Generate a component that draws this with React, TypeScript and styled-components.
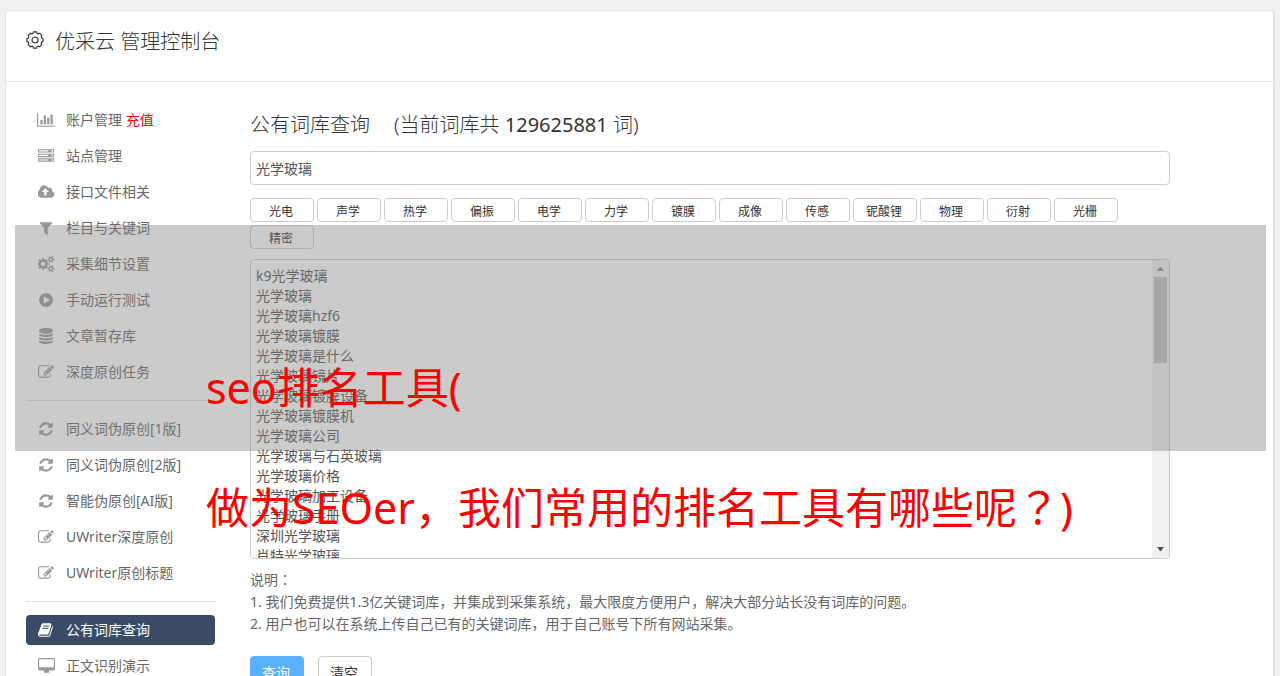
import React, { useState } from "react";
import styled, { createGlobalStyle } from "styled-components";

const GlobalStyle = createGlobalStyle`
  *, *::before, *::after { box-sizing: border-box; }
  html { scrollbar-width: none; }
  body {
    margin: 0;
    background: #f1f1f1;
    color: #666;
    font: 14px/22px "Noto Sans", "Noto Sans CJK SC", sans-serif;
  }
  button, input, textarea { font: inherit; }
`;

const Page = styled.div`
  position: relative;
  padding: 10px 5px 0;
`;

const Panel = styled.div`
  background: #fff;
  border: 1px solid #e4e4e4;
  border-right-width: 2px;
  border-radius: 4px;
`;

const Header = styled.header`
  display: flex;
  align-items: center;
  gap: 11px;
  height: 71px;
  padding: 0 20px 12px;
  border-bottom: 1px solid #e5e5e5;
  color: #333;
`;

const Title = styled.h1`
  margin: 0;
  padding-top: 4px;
  font-size: 20px;
  line-height: 28px;
  font-weight: 300;
`;

const Body = styled.div`
  display: flex;
  align-items: flex-start;
  gap: 35px;
  padding: 23px 103px 24px 20px;
`;

const Sidebar = styled.nav`
  flex: 0 0 189px;
`;

const MenuList = styled.ul`
  list-style: none;
  margin: 0;
  padding: 0;
  display: flex;
  flex-direction: column;
  gap: 6px;

  & + & {
    margin-top: 13px;
    padding-top: 13px;
    border-top: 1px solid #ddd;
  }
`;

const MenuLink = styled.a<{ $active?: boolean }>`
  display: flex;
  align-items: center;
  gap: 10px;
  height: 30px;
  padding: 0 10px;
  border-radius: 4px;
  text-decoration: none;
  white-space: nowrap;
  color: ${(p) => (p.$active ? "#fff" : "#666")};
  background: ${(p) => (p.$active ? "#3b4b66" : "transparent")};

  svg { color: ${(p) => (p.$active ? "#fff" : "#999")}; }
`;

const IconBox = styled.span`
  display: flex;
  justify-content: center;
  flex: 0 0 20px;
`;

const Recharge = styled.span`
  color: #f00;
`;

const Main = styled.main`
  flex: 1;
  min-width: 0;
`;

const Heading = styled.h2`
  display: flex;
  gap: 24px;
  margin: 6px 0 12px;
  font-size: 20px;
  line-height: 28px;
  font-weight: 300;
  color: #333;
`;

const Count = styled.span`
  font-weight: 400;
`;

/* Full-width marks centred in their cell. */
const WideMark = styled.span`
  font-family: "Noto Sans CJK TC", sans-serif;
  line-height: 1;
`;

const SearchInput = styled.input`
  display: block;
  width: 100%;
  height: 34px;
  padding: 0 5px;
  border: 1px solid #ccc;
  border-radius: 4px;
  color: #555;
  background: #fff;
`;

const Tags = styled.div`
  display: flex;
  flex-wrap: wrap;
  gap: 3px;
  margin: 13px 0 10px;
`;

const Tag = styled.button`
  width: 64px;
  height: 24px;
  padding: 4px 2px 0 0;
  border: 1px solid #ccc;
  border-radius: 4px;
  background: #fff;
  color: #333;
  font-size: 12px;
  line-height: 18px;
`;

const ResultBox = styled.div`
  display: flex;
  height: 300px;
  border: 1px solid #ccc;
  border-radius: 4px;
  overflow: hidden;
`;

const Results = styled.textarea`
  flex: 1;
  min-width: 0;
  padding: 6px 5px;
  border: 0;
  resize: none;
  overflow: hidden;
  background: #fff;
  color: #555;
  line-height: 20px;
  outline: 0;
`;

const ScrollTrack = styled.div`
  display: flex;
  flex-direction: column;
  align-items: center;
  width: 17px;
  background: #f0f0f0;
`;

const ScrollArrow = styled.span<{ $down?: boolean }>`
  display: flex;
  align-items: center;
  justify-content: center;
  width: 17px;
  height: ${(p) => (p.$down ? "18px" : "17px")};
  color: ${(p) => (p.$down ? "#505050" : "#8b8b8b")};
  margin-top: ${(p) => (p.$down ? "auto" : "0")};
`;

const ScrollThumb = styled.div`
  width: 13px;
  height: 86px;
  background: #c1c1c1;
`;

const Notes = styled.div`
  margin-top: 10px;
  line-height: 22px;
`;

const Actions = styled.div`
  display: flex;
  gap: 14px;
  margin-top: 21px;
`;

const Action = styled.button<{ $primary?: boolean }>`
  width: 54px;
  height: 34px;
  padding: 0 2px 0 0;
  border: 1px solid ${(p) => (p.$primary ? "#5ab0ff" : "#ccc")};
  border-radius: 4px;
  background: ${(p) => (p.$primary ? "#5ab0ff" : "#fff")};
  color: ${(p) => (p.$primary ? "#fff" : "#333")};
`;

const Shade = styled.div`
  position: absolute;
  top: 225px;
  left: 15px;
  right: 14px;
  height: 226px;
  background: rgba(128, 128, 128, 0.41);
  pointer-events: none;
`;

const Caption = styled.div`
  position: absolute;
  top: 328px;
  left: 206px;
  font-size: 43px;
  line-height: 120px;
  color: #f00;
  white-space: nowrap;
  pointer-events: none;

  p { margin: 0; }
`;

const shapes = {
  chart: [2048, "M640 896v512h-256v-512h256zm384-512v1024h-256v-1024h256zm1024 1152v128h-2048v-1536h128v1408h1920zm-640-896v768h-256v-768h256zm384-384v1152h-256v-1152h256z"],
  server: [1792, "M128 1408h1024v-128h-1024v128zm0-512h1024v-128h-1024v128zm1568 448q0-40-28-68t-68-28-68 28-28 68 28 68 68 28 68-28 28-68zm-1568-960h1024v-128h-1024v128zm1568 448q0-40-28-68t-68-28-68 28-28 68 28 68 68 28 68-28 28-68zm0-512q0-40-28-68t-68-28-68 28-28 68 28 68 68 28 68-28 28-68zm96 832v384h-1792v-384h1792zm0-512v384h-1792v-384h1792zm0-512v384h-1792v-384h1792z"],
  cloud: [1920, "M1216 864q0-14-9-23l-352-352q-9-9-23-9t-23 9l-351 351q-10 12-10 24 0 14 9 23t23 9h224v352q0 13 9.5 22.5t22.5 9.5h192q13 0 22.5-9.5t9.5-22.5v-352h224q13 0 22.5-9.5t9.5-22.5zm640 288q0 159-112.5 271.5t-271.5 112.5h-1088q-185 0-316.5-131.5t-131.5-316.5q0-130 70-240t188-165q-2-30-2-43 0-212 150-362t362-150q156 0 285.5 87t188.5 231q71-62 166-62 106 0 181 75t75 181q0 76-41 138 130 31 213.5 135.5t83.5 238.5z"],
  filter: [1792, "M1595 295q17 41-14 70l-493 493v742q0 42-39 59-13 5-25 5-27 0-45-19l-256-256q-19-19-19-45v-486l-493-493q-31-29-14-70 17-39 59-39h1280q42 0 59 39z"],
  cogs: [1920, "M832 896q0-106-75-181t-181-75-181 75-75 181 75 181 181 75 181-75 75-181zm768 512q0-52-38-90t-90-38-90 38-38 90q0 53 37.5 90.5t90.5 37.5 90.5-37.5 37.5-90.5zm0-1024q0-52-38-90t-90-38-90 38-38 90q0 53 37.5 90.5t90.5 37.5 90.5-37.5 37.5-90.5zm-384 421v185q0 10-7 19.5t-16 10.5l-155 24q-11 35-32 76 34 48 90 115 7 11 7 20 0 12-7 19-23 30-82.5 89.5t-78.5 59.5q-11 0-21-7l-115-90q-37 19-77 31-11 108-23 155-7 24-30 24h-186q-11 0-20-7.5t-10-17.5l-23-153q-34-10-75-31l-118 89q-7 7-20 7-11 0-21-8-144-133-144-160 0-9 7-19 10-14 41-53t47-61q-23-44-35-82l-152-24q-10-1-17-9.5t-7-19.5v-185q0-10 7-19.5t16-10.5l155-24q11-35 32-76-34-48-90-115-7-11-7-20 0-12 7-20 22-30 82-89t79-59q11 0 21 7l115 90q34-18 77-32 11-108 23-154 7-24 30-24h186q11 0 20 7.5t10 17.5l23 153q34 10 75 31l118-89q8-7 20-7 11 0 21 8 144 133 144 160 0 8-7 19-12 16-42 54t-45 60q23 48 34 82l152 23q10 2 17 10.5t7 19.5zm640 533v140q0 16-149 31-12 27-30 52 51 113 51 138 0 4-4 7-122 71-124 71-8 0-46-47t-52-68q-20 2-30 2t-30-2q-14 21-52 68t-46 47q-2 0-124-71-4-3-4-7 0-25 51-138-18-25-30-52-149-15-149-31v-140q0-16 149-31 13-29 30-52-51-113-51-138 0-4 4-7 4-2 35-20t59-34 30-16q8 0 46 46.5t52 67.5q20-2 30-2t30 2q51-71 92-112l6-2q4 0 124 70 4 3 4 7 0 25-51 138 17 23 30 52 149 15 149 31zm0-1024v140q0 16-149 31-12 27-30 52 51 113 51 138 0 4-4 7-122 71-124 71-8 0-46-47t-52-68q-20 2-30 2t-30-2q-14 21-52 68t-46 47q-2 0-124-71-4-3-4-7 0-25 51-138-18-25-30-52-149-15-149-31v-140q0-16 149-31 13-29 30-52-51-113-51-138 0-4 4-7 4-2 35-20t59-34 30-16q8 0 46 46.5t52 67.5q20-2 30-2t30 2q51-71 92-112l6-2q4 0 124 70 4 3 4 7 0 25-51 138 17 23 30 52 149 15 149 31z"],
  play: [1792, "M896 128q209 0 385.5 103t279.5 279.5 103 385.5-103 385.5-279.5 279.5-385.5 103-385.5-103-279.5-279.5-103-385.5 103-385.5 279.5-279.5 385.5-103zm384 823q32-18 32-55t-32-55l-544-320q-31-19-64-1-32 19-32 56v640q0 37 32 56 16 8 32 8 17 0 32-9z"],
  database: [1792, "M896 768q237 0 443-43t325-127v170q0 69-103 128t-280 93.5-385 34.5-385-34.5-280-93.5-103-128v-170q119 84 325 127t443 43zm0 768q237 0 443-43t325-127v170q0 69-103 128t-280 93.5-385 34.5-385-34.5-280-93.5-103-128v-170q119 84 325 127t443 43zm0-384q237 0 443-43t325-127v170q0 69-103 128t-280 93.5-385 34.5-385-34.5-280-93.5-103-128v-170q119 84 325 127t443 43zm0-1152q208 0 385 34.5t280 93.5 103 128v128q0 69-103 128t-280 93.5-385 34.5-385-34.5-280-93.5-103-128v-128q0-69 103-128t280-93.5 385-34.5z"],
  edit: [1792, "M888 1184l116-116-152-152-116 116v56h96v96h56zm440-720q-16-16-33 1l-350 350q-17 17-1 33t33-1l350-350q17-17 1-33zm80 594v190q0 119-84.5 203.5t-203.5 84.5h-832q-119 0-203.5-84.5t-84.5-203.5v-832q0-119 84.5-203.5t203.5-84.5h832q63 0 117 25 15 7 18 23 3 17-9 29l-49 49q-14 14-32 8-23-6-45-6h-832q-66 0-113 47t-47 113v832q0 66 47 113t113 47h832q66 0 113-47t47-113v-126q0-13 9-22l64-64q15-15 35-7t20 29zm-96-738l288 288-672 672h-288v-288zm444 132l-92 92-288-288 92-92q28-28 68-28t68 28l152 152q28 28 28 68t-28 68z"],
  refresh: [1792, "M1639 1056q0 5-1 7-64 268-268 434.5t-478 166.5q-146 0-282.5-55t-243.5-157l-129 129q-19 19-45 19t-45-19-19-45v-448q0-26 19-45t45-19h448q26 0 45 19t19 45-19 45l-137 137q71 66 161 102t187 36q134 0 250-65t186-179q11-17 53-117 8-23 30-23h192q13 0 22.5 9.5t9.5 22.5zm25-800v448q0 26-19 45t-45 19h-448q-26 0-45-19t-19-45 19-45l138-138q-148-137-349-137-134 0-250 65t-186 179q-11 17-53 117-8 23-30 23h-199q-13 0-22.5-9.5t-9.5-22.5v-7q65-268 270-434.5t480-166.5q146 0 284 55.5t245 156.5l130-129q19-19 45-19t45 19 19 45z"],
  book: [1792, "M1639 478q40 57 18 129l-275 906q-19 64-76.5 107.5t-122.5 43.5h-923q-77 0-148.5-53.5t-99.5-131.5q-24-67-2-127 0-4 3-27t4-37q1-8-3-21.5t-3-19.5q2-11 8-21t16.5-23.5 16.5-23.5q23-38 45-91.5t30-91.5q3-10 .5-30t-.5-28q3-11 17-28t17-23q21-36 42-92t25-90q1-9-2.5-32t.5-28q4-13 22-30.5t22-22.5q19-26 42.5-84.5t27.5-96.5q1-8-3-25.5t-2-26.5q2-8 9-18t18-23 17-21q8-12 16.5-30.5t15-35 16-36 19.5-32 26.5-23.5 36-11.5 47.5 5.5l-1 3q38-9 51-9h761q74 0 114 56t18 130l-274 906q-36 119-71.5 153.5t-128.5 34.5h-869q-27 0-38 15-11 16-1 43 24 70 144 70h923q29 0 56-15.5t35-41.5l300-987q7-22 5-57 38 15 59 43zm-1064 2q-4 13 2 22.5t20 9.5h608q13 0 25.5-9.5t16.5-22.5l21-64q4-13-2-22.5t-20-9.5h-608q-13 0-25.5 9.5t-16.5 22.5zm-83 256q-4 13 2 22.5t20 9.5h608q13 0 25.5-9.5t16.5-22.5l21-64q4-13-2-22.5t-20-9.5h-608q-13 0-25.5 9.5t-16.5 22.5z"],
  desktop: [1920, "M1792 992v-832q0-13-9.5-22.5t-22.5-9.5h-1600q-13 0-22.5 9.5t-9.5 22.5v832q0 13 9.5 22.5t22.5 9.5h1600q13 0 22.5-9.5t9.5-22.5zm128-832v1088q0 66-47 113t-113 47h-544q0 37 16 77.5t32 71 16 43.5q0 26-19 45t-45 19h-512q-26 0-45-19t-19-45q0-14 16-44t32-70 16-78h-544q-66 0-113-47t-47-113v-1088q0-66 47-113t113-47h1600q66 0 113 47t47 113z"],
} as const;

type IconName = keyof typeof shapes;

function MenuIcon({ name }: { name: IconName }) {
  const [width, d] = shapes[name];
  return (
    <IconBox>
      <svg width={Math.round(width / 112)} height="16" viewBox={`0 0 ${width} 1792`} fill="currentColor" aria-hidden="true">
        <path d={d} />
      </svg>
    </IconBox>
  );
}

function GearIcon() {
  const teeth = 8;
  const step = 360 / teeth;
  const points: string[] = [];
  for (let i = 0; i < teeth; i++) {
    const at = (deg: number, r: number) => {
      const a = ((i * step + deg - 90) * Math.PI) / 180;
      return `${(9 + r * Math.cos(a)).toFixed(2)} ${(9 + r * Math.sin(a)).toFixed(2)}`;
    };
    points.push(`${i ? "L" : "M"}${at(-11, 8.2)}L${at(11, 8.2)}Q${at(step / 2, 5.6)} ${at(step - 11, 8.2)}`);
  }
  return (
    <svg width="18" height="18" viewBox="0 0 18 18" fill="none" stroke="currentColor" strokeLinejoin="round" aria-hidden="true">
      <path d={points.join("") + "Z"} strokeWidth="1.2" />
      <circle cx="9" cy="9" r="3" strokeWidth="1.2" />
    </svg>
  );
}

interface Item {
  icon: IconName;
  label: string;
  extra?: string;
  active?: boolean;
}

const menus: Item[][] = [
  [
    { icon: "chart", label: "账户管理", extra: "充值" },
    { icon: "server", label: "站点管理" },
    { icon: "cloud", label: "接口文件相关" },
    { icon: "filter", label: "栏目与关键词" },
    { icon: "cogs", label: "采集细节设置" },
    { icon: "play", label: "手动运行测试" },
    { icon: "database", label: "文章暂存库" },
    { icon: "edit", label: "深度原创任务" },
  ],
  [
    { icon: "refresh", label: "同义词伪原创[1版]" },
    { icon: "refresh", label: "同义词伪原创[2版]" },
    { icon: "refresh", label: "智能伪原创[AI版]" },
    { icon: "edit", label: "UWriter深度原创" },
    { icon: "edit", label: "UWriter原创标题" },
  ],
  [
    { icon: "book", label: "公有词库查询", active: true },
    { icon: "desktop", label: "正文识别演示" },
  ],
];

const tags = ["光电", "声学", "热学", "偏振", "电学", "力学", "镀膜", "成像", "传感", "铌酸锂", "物理", "衍射", "光栅", "精密"];

const words = [
  "k9光学玻璃",
  "光学玻璃",
  "光学玻璃hzf6",
  "光学玻璃镀膜",
  "光学玻璃是什么",
  "光学玻璃镜片",
  "光学玻璃镀膜设备",
  "光学玻璃镀膜机",
  "光学玻璃公司",
  "光学玻璃与石英玻璃",
  "光学玻璃价格",
  "光学玻璃加工设备",
  "光学玻璃手册",
  "深圳光学玻璃",
  "肖特光学玻璃",
].join("\n");

export default function App() {
  const [query, setQuery] = useState("光学玻璃");

  return (
    <Page>
      <GlobalStyle />
      <Panel>
        <Header>
          <GearIcon />
          <Title>优采云 管理控制台</Title>
        </Header>
        <Body>
          <Sidebar aria-label="管理菜单">
            {menus.map((items, i) => (
              <MenuList key={i}>
                {items.map((item) => (
                  <li key={item.label}>
                    <MenuLink href="#" $active={item.active}>
                      <MenuIcon name={item.icon} />
                      <span>
                        {item.label}
                        {item.extra && <Recharge> {item.extra}</Recharge>}
                      </span>
                    </MenuLink>
                  </li>
                ))}
              </MenuList>
            ))}
          </Sidebar>
          <Main>
            <Heading>
              <span>公有词库查询</span>
              <span>(当前词库共 <Count>129625881</Count> 词)</span>
            </Heading>
            <SearchInput aria-label="关键词" value={query} onChange={(e) => setQuery(e.target.value)} />
            <Tags>
              {tags.map((tag) => (
                <Tag key={tag} type="button" onClick={() => setQuery(tag)}>
                  {tag}
                </Tag>
              ))}
            </Tags>
            <ResultBox>
              <Results aria-label="查询结果" readOnly value={words} />
              <ScrollTrack aria-hidden="true">
                <ScrollArrow>
                  <svg width="7" height="4" viewBox="0 0 7 4" fill="currentColor"><path d="M3 0h1l3 4H0z" /></svg>
                </ScrollArrow>
                <ScrollThumb />
                <ScrollArrow $down>
                  <svg width="7" height="4" viewBox="0 0 7 4" fill="currentColor"><path d="M0 0h7L4 4H3z" /></svg>
                </ScrollArrow>
              </ScrollTrack>
            </ResultBox>
            <Notes>
              <div>说明<WideMark>：</WideMark></div>
              <div>1. 我们免费提供1.3亿关键词库，并集成到采集系统，最大限度方便用户，解决大部分站长没有词库的问题。</div>
              <div>2. 用户也可以在系统上传自己已有的关键词库，用于自己账号下所有网站采集。</div>
            </Notes>
            <Actions>
              <Action type="button" $primary>查询</Action>
              <Action type="button" onClick={() => setQuery("")}>清空</Action>
            </Actions>
          </Main>
        </Body>
      </Panel>
      <Shade />
      <Caption>
        <p>seo排名工具(</p>
        <p>做为SEOer，我们常用的排名工具有哪些呢<WideMark>？</WideMark>)</p>
      </Caption>
    </Page>
  );
}
